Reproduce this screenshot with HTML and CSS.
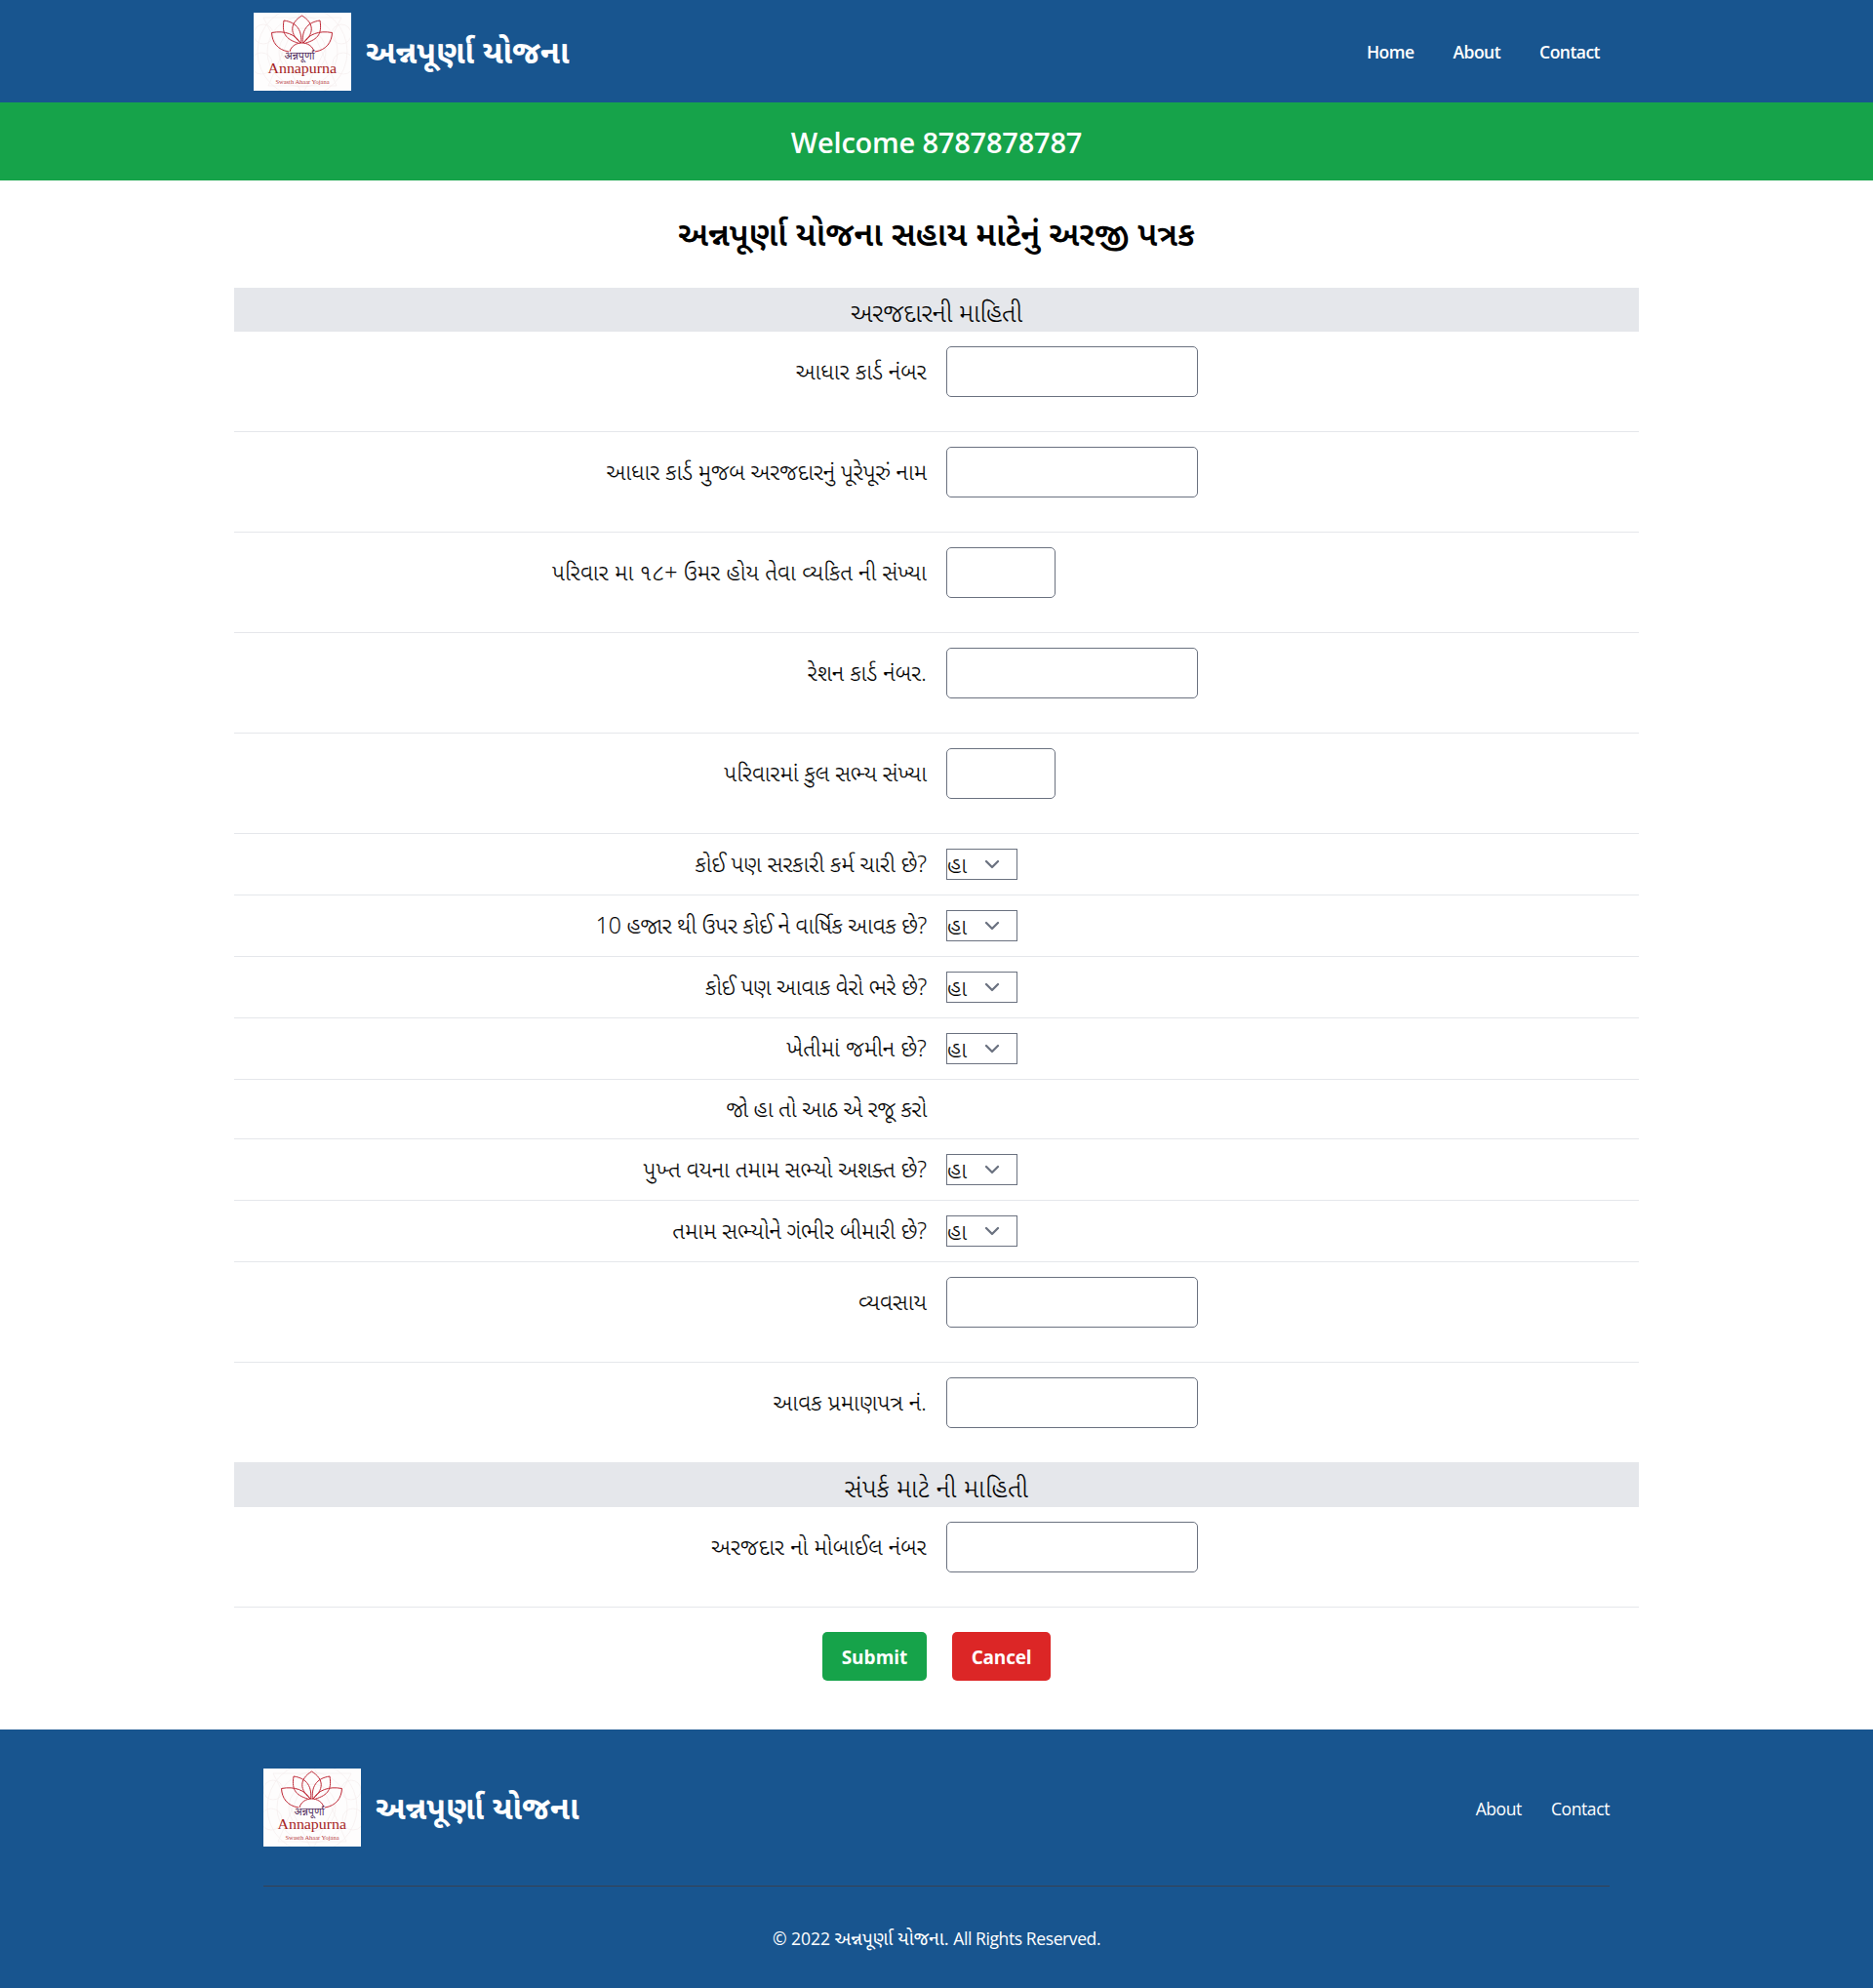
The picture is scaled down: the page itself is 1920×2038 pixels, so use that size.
FILE: index.html
```html
<!DOCTYPE html>
<html lang="gu">
<head>
<meta charset="utf-8">
<title>અન્નપૂર્ણા યોજના</title>
<link rel="stylesheet" href="styles.css">
</head>
<body>
<svg class="defs" width="0" height="0" aria-hidden="true">
  <symbol id="logo" viewBox="0 0 100 80">
    <rect width="100" height="80" fill="#fefdfd"/>
    <g fill="none" stroke="#f5eeee" stroke-width=".7">
      <circle cx="50" cy="40" r="24"/><circle cx="50" cy="40" r="36"/><circle cx="50" cy="40" r="46"/>
      <circle cx="10" cy="22" r="10"/><circle cx="90" cy="22" r="10"/><circle cx="8" cy="52" r="11"/><circle cx="92" cy="52" r="11"/>
      <path d="M50 -6 85 75H15zM10 5h80L50 84z"/>
    </g>
    <g fill="none" stroke="#bf2a38" stroke-width="1">
      <path d="M49.500 3C36.500 11 36.500 22 49.500 32C62.500 22 62.500 11 49.500 3z"/>
      <path d="M31 8C28.500 23 34 28 48.500 32C50 19 45 10 31 8z"/>
      <path d="M68 8C70.500 23 65 28 50.500 32C49 19 54 10 68 8z"/>
      <path d="M36 40C24 38 19 30 18.500 20.500C32 18 43 22 48.500 32"/>
      <path d="M63 40C75 38 80 30 80.500 20.500C67 18 56 22 50.500 32"/>
      <path d="M37 40C40 28 59 28 62 40" fill="#fff"/>
    </g>
    <text class="logo-hi" x="47" y="47.500" text-anchor="middle" textLength="31" lengthAdjust="spacingAndGlyphs">अन्नपूर्णा</text>
    <text class="logo-en" x="14.500" y="62" textLength="70.500" lengthAdjust="spacingAndGlyphs">Annapurna</text>
    <text class="logo-sub" x="22.500" y="73" textLength="55" lengthAdjust="spacingAndGlyphs">Swasth Ahaar Yojana</text>
  </symbol>
  <symbol id="chevron" viewBox="0 0 20 20">
    <path d="M6 8l4 4 4-4" fill="none" stroke="#6b7280" stroke-width="1.500" stroke-linecap="round" stroke-linejoin="round"/>
  </symbol>
</svg>

<header class="header">
  <div class="header-inner">
    <a class="brand"><svg class="logo"><use href="#logo"/></svg><span class="brand-name">અન્નપૂર્ણા યોજના</span></a>
    <nav class="nav"><a>Home</a><a>About</a><a>Contact</a></nav>
  </div>
</header>
<div class="welcome">Welcome 8787878787</div>

<main class="form">
  <h1 class="title">અન્નપૂર્ણા યોજના સહાય માટેનું અરજી પત્રક</h1>
  <h2 class="section">અરજદારની માહિતી</h2>
  <div class="row"><label class="label loose">આધાર કાર્ડ નંબર</label><div class="input"></div></div>
  <div class="row"><label class="label">આધાર કાર્ડ મુજબ અરજદારનું પૂરેપૂરું નામ</label><div class="input"></div></div>
  <div class="row"><label class="label loose">પરિવાર મા ૧૮+ ઉમર હોય તેવા વ્યકિત ની સંખ્યા</label><div class="input input-small"></div></div>
  <div class="row"><label class="label loose">રેશન કાર્ડ નંબર.</label><div class="input"></div></div>
  <div class="row"><label class="label">પરિવારમાં કુલ સભ્ય સંખ્યા</label><div class="input input-small"></div></div>
  <div class="row row-select"><label class="label">કોઈ પણ સરકારી કર્મ ચારી છે?</label><div class="select">હા<svg class="chevron"><use href="#chevron"/></svg></div></div>
  <div class="row row-select"><label class="label tight">10 હજાર થી ઉપર કોઈ ને વાર્ષિક આવક છે?</label><div class="select">હા<svg class="chevron"><use href="#chevron"/></svg></div></div>
  <div class="row row-select"><label class="label tight">કોઈ પણ આવાક વેરો ભરે છે?</label><div class="select">હા<svg class="chevron"><use href="#chevron"/></svg></div></div>
  <div class="row row-select"><label class="label loose">ખેતીમાં જમીન છે?</label><div class="select">હા<svg class="chevron"><use href="#chevron"/></svg></div></div>
  <div class="row row-note"><label class="label tight">જો હા તો આઠ એ રજૂ કરો</label></div>
  <div class="row row-select"><label class="label">પુખ્ત વયના તમામ સભ્યો અશક્ત છે?</label><div class="select">હા<svg class="chevron"><use href="#chevron"/></svg></div></div>
  <div class="row row-select"><label class="label">તમામ સભ્યોને ગંભીર બીમારી છે?</label><div class="select">હા<svg class="chevron"><use href="#chevron"/></svg></div></div>
  <div class="row"><label class="label loose">વ્યવસાય</label><div class="input"></div></div>
  <div class="row row-last"><label class="label loose">આવક પ્રમાણપત્ર નં.</label><div class="input"></div></div>
  <h2 class="section section-contact">સંપર્ક માટે ની માહિતી</h2>
  <div class="row"><label class="label loose">અરજદાર નો મોબાઈલ નંબર</label><div class="input"></div></div>
  <div class="actions"><button class="btn btn-submit">Submit</button><button class="btn btn-cancel">Cancel</button></div>
</main>

<footer class="footer">
  <div class="footer-inner">
    <div class="footer-top">
      <a class="brand"><svg class="logo"><use href="#logo"/></svg><span class="brand-name">અન્નપૂર્ણા યોજના</span></a>
      <nav class="footer-nav"><a>About</a><a>Contact</a></nav>
    </div>
    <p class="copyright">© 2022 <span class="copyright-name">અન્નપૂર્ણા યોજના.</span> <span class="rights">All Rights Reserved.</span></p>
  </div>
</footer>
</body>
</html>
```
FILE: styles.css
```css
* { box-sizing: border-box; }
body { margin: 0; background: #fff; color: #000; font-family: "Open Sans", "Noto Sans", "Noto Sans Gujarati", sans-serif; }
.defs { display: none; }
.logo-hi { font: 11px "Noto Sans", sans-serif; fill: #54305f; }
.logo-en { font: 14px "Liberation Serif", serif; fill: #a51f25; }
.logo-sub { font: 6px "Liberation Serif", serif; fill: #b53a41; }

.header { height: 105px; background: #18558f; color: #fff; }
.header-inner { width: 1400px; margin: 0 auto; padding-top: 13px; display: flex; justify-content: space-between; align-items: flex-start; }
.brand { display: flex; align-items: center; gap: 15px; }
.logo { width: 100px; height: 80px; flex: none; }
.brand-name { font-size: 32.600px; font-weight: 700; line-height: 40px; white-space: nowrap; }
.nav { height: 80px; display: flex; align-items: center; gap: 40px; padding-right: 20px; font-size: 17.500px; font-weight: 600; letter-spacing: -.52px; }

.welcome { height: 80px; display: flex; align-items: center; justify-content: center; background: #16a34a; color: #fff; font-size: 29px; font-weight: 600; letter-spacing: -.2px; }

.form { width: 1440px; margin: 0 auto; }
.title { height: 110px; margin: 0; padding-top: 2px; display: flex; align-items: center; justify-content: center; font-size: 33.800px; font-weight: 600; }
.section { height: 45px; margin: 0; display: flex; justify-content: center; padding-top: 7px; background: #e5e7eb; font-size: 26px; font-weight: 300; line-height: 36px; -webkit-text-stroke: .15px #000; }
.section-contact { height: 46px; padding-top: 8px; letter-spacing: .45px; }
.row { height: 103px; padding-top: 15px; display: grid; grid-template-columns: 710px 1fr; column-gap: 20px; align-items: start; border-bottom: 1px solid #e5e7eb; }
.row-select { height: 63px; }
.row-note { height: 61px; }
.row-last { height: 102px; border-bottom: 0; }
.label { line-height: 51px; font-size: 23px; font-weight: 300; text-align: right; white-space: nowrap; -webkit-text-stroke: .15px #000; }
.loose { letter-spacing: .18px; }
.tight { letter-spacing: -.2px; }
.row-select .label { line-height: 31px; }
.row-note .label { line-height: 29px; }
.input { width: 258px; height: 52px; border: 1px solid #6b7280; border-radius: 5px; background: #fff; }
.input-small { width: 112px; }
.select { width: 73px; height: 32px; padding-right: 10px; display: flex; align-items: center; justify-content: space-between; border: 1px solid #6b7280; font-size: 23px; font-weight: 300; line-height: 28px; -webkit-text-stroke: .15px #000; }
.chevron { width: 30px; height: 30px; }
.actions { padding: 25px 3px 50px 603px; display: flex; gap: 26px; }
.btn { height: 50px; width: 107px; padding: 2px 0 0; border: 0; border-radius: 5px; color: #fff; font: 700 19px "Open Sans", sans-serif; }
.btn-submit { background: #16a34a; }
.btn-cancel { width: 101px; background: #dc2626; letter-spacing: -.2px; }

.footer { height: 265px; background: #18558f; color: #fff; }
.footer-inner { width: 1380px; margin: 0 auto; padding-top: 40px; }
.footer-top { height: 121px; display: flex; align-items: flex-start; justify-content: space-between; border-bottom: 1px solid #374151; }
.footer-nav { display: flex; gap: 30px; align-items: center; height: 80px; padding-top: 2px; font-size: 17.500px; letter-spacing: -.4px; }
.copyright { margin: 0; padding-top: 38px; text-align: center; font-size: 17.500px; line-height: 30px; }
.copyright-name { font-size: 19px; }
.rights { letter-spacing: -.4px; }
```
